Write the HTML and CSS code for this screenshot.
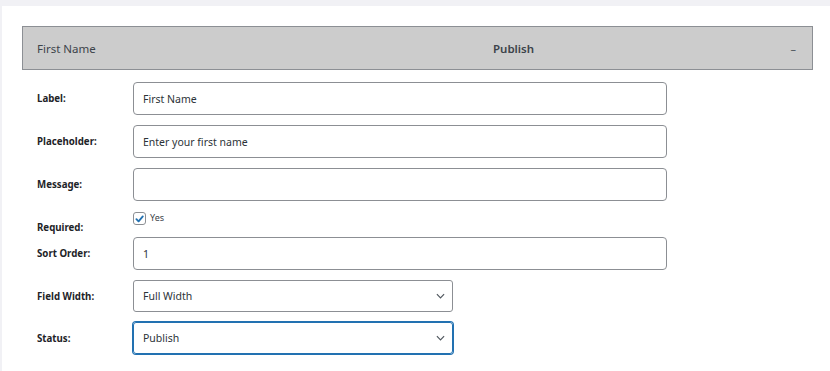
FILE: index.html
```html
<!DOCTYPE html>
<html lang="en">
<head>
    <meta charset="UTF-8" />
    <meta name="viewport" content="width=device-width, initial-scale=1.0" />
    <title>Field settings</title>
    <link rel="stylesheet" href="styles.css">
</head>
<body>
    <div class="page">
        <div class="panel">
            <div class="field-head">
                <span class="field-title">First Name</span>
                <span class="field-status">Publish</span>
                <span class="field-toggle">&ndash;</span>
            </div>

            <form class="field-form">
                <div class="row">
                    <label class="row-label" for="f-label">Label:</label>
                    <input id="f-label" class="text-input" type="text" value="First Name" />
                </div>
                <div class="row">
                    <label class="row-label" for="f-ph">Placeholder:</label>
                    <input id="f-ph" class="text-input" type="text" value="Enter your first name" />
                </div>
                <div class="row">
                    <label class="row-label" for="f-msg">Message:</label>
                    <input id="f-msg" class="text-input" type="text" value="" />
                </div>
                <div class="row row-check">
                    <span class="row-label">Required:</span>
                    <label class="check">
                        <span class="check-box">
                            <svg viewBox="0 0 12 12" width="12" height="12"><path d="M2.6 6.2 L5 8.6 L9.6 3.2" fill="none" stroke="#2271b1" stroke-width="2" stroke-linecap="round" stroke-linejoin="round"/></svg>
                        </span>
                        <span class="check-text">Yes</span>
                    </label>
                </div>
                <div class="row">
                    <label class="row-label" for="f-sort">Sort Order:</label>
                    <input id="f-sort" class="text-input" type="text" value="1" />
                </div>
                <div class="row row-select">
                    <span class="row-label">Field Width:</span>
                    <div class="select">
                        <span>Full Width</span>
                        <svg class="chev" viewBox="0 0 10 6" width="10" height="6"><path d="M1 1 L5 5 L9 1" fill="none" stroke="#50575e" stroke-width="1.3"/></svg>
                    </div>
                </div>
                <div class="row row-select">
                    <span class="row-label">Status:</span>
                    <div class="select is-focus">
                        <span>Publish</span>
                        <svg class="chev" viewBox="0 0 10 6" width="10" height="6"><path d="M1 1 L5 5 L9 1" fill="none" stroke="#50575e" stroke-width="1.3"/></svg>
                    </div>
                </div>
            </form>
        </div>
    </div>
</body>
</html>
```

FILE: styles.css
```css
/* base */
* { box-sizing: border-box; }
html, body { margin: 0; height: 100%; }
body { background: #f1f1f5; font-family: 'Noto Sans', 'Liberation Sans', sans-serif; color: #2c3338; }

.page { padding: 6px 0 0 2px; height: 100%; }
.panel { background: #fff; height: 100%; padding: 20px 17px 14px 20px; }

/* field header bar */
.field-head {
    display: grid;
    grid-template-columns: 470px 1fr auto;
    align-items: center;
    height: 44px;
    background: #cccccc;
    border: 1px solid #8c8f94;
    color: #3c434a;
    font-size: 11.5px;
}
.field-title { padding-left: 14px; }
.field-status { font-weight: 600; font-size: 11.5px; }
.field-toggle { padding-right: 16px; color: #50575e; font-size: 11px; }

/* rows */
.field-form { padding: 12px 0 0 15px; }
.row { display: flex; align-items: center; margin-bottom: 10px; }
.row-label { width: 96px; flex: none; font-weight: 700; font-size: 9.7px; color: #1d2327; }

.text-input {
    width: 534px;
    height: 33px;
    padding: 0 9px;
    border: 1px solid #8c8f94;
    border-radius: 4px;
    background: #fff;
    font-family: inherit;
    font-size: 10.5px;
    color: #2c3338;
    outline: none;
}

/* required checkbox */
.row-check { align-items: flex-start; margin-bottom: 0; height: 26px; padding-top: 1px; }
.row-check .row-label { margin-top: 9px; line-height: 14px; }
.check { display: flex; align-items: center; gap: 4px; }
.check-box {
    display: flex;
    align-items: center;
    justify-content: center;
    width: 13px;
    height: 13px;
    border: 1px solid #8c8f94;
    border-radius: 3px;
    background: #fff;
}
.check-text { font-size: 9px; color: #3c434a; line-height: 12px; margin-top: -2px; }

/* selects */
.row-select { margin-top: 1px; }
.select {
    display: flex;
    align-items: center;
    justify-content: space-between;
    width: 320px;
    height: 32px;
    padding: 0 7px 0 9px;
    border: 1px solid #8c8f94;
    border-radius: 3px;
    font-size: 10.5px;
    color: #2c3338;
}
.select.is-focus { border-color: #2271b1; box-shadow: 0 0 0 1px #2271b1; }
.chev { width: 9px; height: 6px; }
```
